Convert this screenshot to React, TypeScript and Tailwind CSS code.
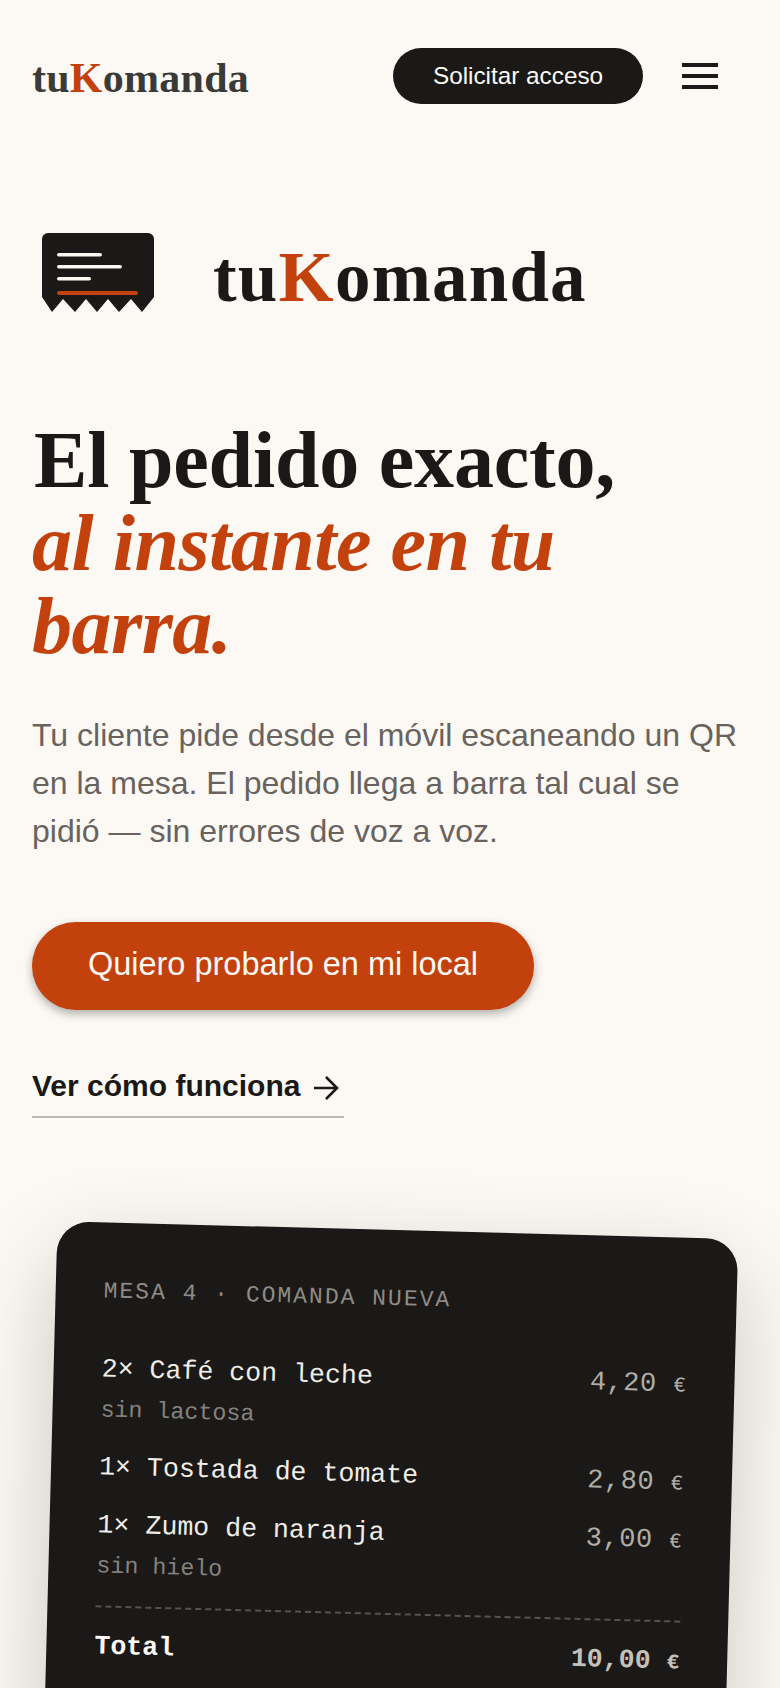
const serif = "font-['Liberation_Serif',serif]";

const items = [
  { qty: "2×", name: "Café con leche", note: "sin lactosa", price: "4,20" },
  { qty: "1×", name: "Tostada de tomate", note: "", price: "2,80" },
  { qty: "1×", name: "Zumo de naranja", note: "sin hielo", price: "3,00" },
];

function Wordmark({ className, dark }: { className: string; dark: string }) {
  return (
    <span className={`${serif} font-bold ${dark} ${className}`}>
      tu<span className="text-[#c2410c]">K</span>omanda
    </span>
  );
}

function ReceiptIcon() {
  return (
    <svg width="112" height="80" viewBox="0 0 112 80" className="shrink-0">
      <path
        d="M6 0H106a6 6 0 0 1 6 6V64L100 79 89 66 77 79 66 66 55 79 44 66 33 79 21 66 10 79 0 64V6a6 6 0 0 1 6-6z"
        fill="#1a1917"
      />
      <rect x="15" y="20" width="45" height="3.5" rx="1.75" fill="#fbf8f1" />
      <rect x="15" y="32" width="65" height="3.5" rx="1.75" fill="#fbf8f1" />
      <rect x="15" y="44" width="34" height="3.5" rx="1.75" fill="#fbf8f1" />
      <rect x="15" y="58" width="81" height="4" rx="2" fill="#c2410c" />
    </svg>
  );
}

export default function App() {
  return (
    <div className="h-[1688px] w-[780px] overflow-hidden bg-[#fcf9f4] font-['Liberation_Sans',sans-serif] text-[#1a1917]">
      {/* HEADER */}
      <header className="flex h-[152px] items-center pl-8 pr-[62px]">
        <Wordmark className="mt-1 text-[42px] leading-none tracking-[0.25px]" dark="text-[#3a3a38]" />
        <a className="ml-auto flex h-14 w-[250px] items-center justify-center rounded-full bg-[#1a1917] text-[24.3px] text-[#fcf9f4]">
          Solicitar acceso
        </a>
        <div className="ml-[39px] flex w-9 flex-col gap-[7px]">
          <span className="h-1 bg-[#1a1917]" />
          <span className="h-1 bg-[#1a1917]" />
          <span className="h-1 bg-[#1a1917]" />
        </div>
      </header>

      {/* HERO */}
      <main className="px-8">
        <div className="mt-[81px] flex items-center gap-[59px] pl-2.5">
          <ReceiptIcon />
          <Wordmark className="mt-2 text-[71px] leading-none tracking-[1.2px]" dark="text-[#1a1917]" />
        </div>

        <h1 className={`${serif} mt-[106px] text-[80px] font-bold leading-[83px] tracking-[-0.5px]`}>
          <span className="pl-[2px] tracking-[-0.2px]">El pedido exacto,</span>
          <br />
          <em className="text-[#c2410c]">
            al instante en tu
            <br />
            barra.
          </em>
        </h1>

        <p className="mt-[43px] text-[32px] leading-[48px] text-[#68635e]">
          Tu cliente pide desde el móvil escaneando un QR en la mesa. El pedido llega a barra tal cual se pidió — sin errores de voz a voz.
        </p>

        <a className="mt-[67px] flex h-[88px] w-[502px] items-center justify-center rounded-full bg-[#c2410c] pb-1 text-[32.5px] text-[#fdf8f3] shadow-[0_4px_10px_rgba(0,0,0,0.3)]">
          Quiero probarlo en mi local
        </a>

        <a className="mt-[51px] flex h-[57px] w-[312px] items-start gap-3 border-b-2 border-[#bdb9b3] pt-[2px] text-[30px] font-bold">
          Ver cómo funciona
          <svg width="28" height="28" viewBox="0 0 28 28" fill="none" stroke="#1a1917" strokeWidth="2.6" className="mt-[11px] shrink-0">
            <path d="M2 14H25M14 3l11 11-11 11" />
          </svg>
        </a>

        {/* TICKET */}
        <div className="ml-[17px] mt-[112px] h-[640px] w-[681px] rotate-[1.5deg] rounded-[32px] bg-[#1a1917] px-12 pt-[53px] font-['Liberation_Mono',monospace] shadow-[0_30px_90px_rgba(0,0,0,0.2)]">
          <div className="text-[23px] leading-8 tracking-[2px] text-[#8e8b86]">MESA 4 · COMANDA NUEVA</div>
          <div className="mt-[44px] flex flex-col gap-[20px]">
            {items.map((item) => (
              <div key={item.name} className="flex items-start justify-between">
                <div>
                  <div className="text-[26.6px] leading-[36px] text-[#f0ede6]">
                    {item.qty} {item.name}
                  </div>
                  {item.note && <div className="mb-[3px] mt-[7px] text-[23.3px] leading-8 text-[#85827d]">{item.note}</div>}
                </div>
                <div className="text-[27px] leading-[36px] tracking-[0.5px] text-[#b0ada8]">
                  {item.price} <span className="text-[21px]">€</span>
                </div>
              </div>
            ))}
          </div>
          <div className="mt-[20px] border-t-2 border-dashed border-[#55534f]" />
          <div className="mt-[21px] flex items-start justify-between text-[26.6px] font-bold leading-[36px]">
            <span className="text-[#fcf9f4]">Total</span>
            <span className="text-[#c4c1bb]">
              10,00 <span className="text-[21px]">€</span>
            </span>
          </div>
        </div>
      </main>
    </div>
  );
}
